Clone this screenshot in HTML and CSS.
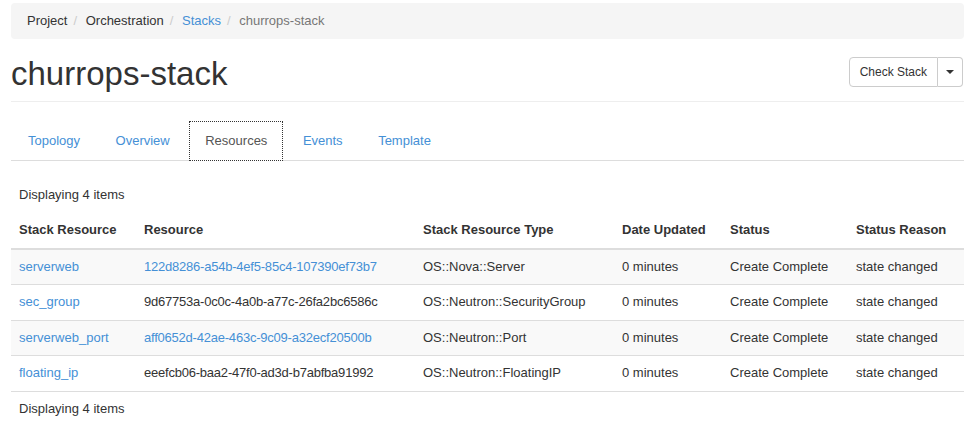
FILE: index.html
```html
<!DOCTYPE html>
<html>
<head>
<meta charset="utf-8">
<link rel="stylesheet" href="styles.css">
</head>
<body>
<div class="page">
  <ol class="breadcrumb">
    <li>Project</li>
    <li>Orchestration</li>
    <li><a href="#">Stacks</a></li>
    <li class="current">churrops-stack</li>
  </ol>
  <div class="page-header">
    <h1>churrops-stack</h1>
    <div class="btn-group">
      <button class="btn">Check Stack</button>
      <button class="btn caret-btn"><span class="caret"></span></button>
    </div>
  </div>
  <ul class="tabs">
    <li><a href="#">Topology</a></li>
    <li><a href="#">Overview</a></li>
    <li class="active"><a href="#">Resources</a></li>
    <li><a href="#">Events</a></li>
    <li><a href="#">Template</a></li>
  </ul>
  <table class="table">
    <thead>
      <tr class="meta"><td colspan="6">Displaying 4 items</td></tr>
      <tr class="heads">
        <th class="c1">Stack Resource</th>
        <th class="c2">Resource</th>
        <th class="c3">Stack Resource Type</th>
        <th class="c4">Date Updated</th>
        <th class="c5">Status</th>
        <th class="c6">Status Reason</th>
      </tr>
    </thead>
    <tbody>
      <tr>
        <td><a href="#">serverweb</a></td>
        <td class="uuid"><a href="#">122d8286-a54b-4ef5-85c4-107390ef73b7</a></td>
        <td>OS::Nova::Server</td>
        <td>0 minutes</td>
        <td>Create Complete</td>
        <td>state changed</td>
      </tr>
      <tr>
        <td><a href="#">sec_group</a></td>
        <td class="uuid">9d67753a-0c0c-4a0b-a77c-26fa2bc6586c</td>
        <td>OS::Neutron::SecurityGroup</td>
        <td>0 minutes</td>
        <td>Create Complete</td>
        <td>state changed</td>
      </tr>
      <tr>
        <td><a href="#">serverweb_port</a></td>
        <td class="uuid"><a href="#">aff0652d-42ae-463c-9c09-a32ecf20500b</a></td>
        <td>OS::Neutron::Port</td>
        <td>0 minutes</td>
        <td>Create Complete</td>
        <td>state changed</td>
      </tr>
      <tr>
        <td><a href="#">floating_ip</a></td>
        <td class="uuid">eeefcb06-baa2-47f0-ad3d-b7abfba91992</td>
        <td>OS::Neutron::FloatingIP</td>
        <td>0 minutes</td>
        <td>Create Complete</td>
        <td>state changed</td>
      </tr>
    </tbody>
    <tfoot>
      <tr class="meta"><td colspan="6">Displaying 4 items</td></tr>
    </tfoot>
  </table>
</div>
</body>
</html>
```
FILE: styles.css
```css
* { box-sizing: border-box; }
html, body { margin: 0; padding: 0; background: #fff; }
body {
  font-family: "Liberation Sans", Arial, sans-serif;
  font-size: 13px;
  line-height: 1.428571;
  color: #333;
}
a { color: #4590d6; text-decoration: none; }
.page { padding: 3px 11px 0 11px; width: 975px; }

.breadcrumb {
  list-style: none;
  margin: 0;
  padding: 9px 16px 8px 16px;
  background: #f5f5f5;
  border-radius: 4px;
  display: flex;
}
.breadcrumb li + li::before {
  content: "/\00a0";
  color: #ccc;
  padding: 0 5px;
  margin-left: 1px;
}
.breadcrumb .current { color: #777; }

.page-header {
  display: flex;
  justify-content: space-between;
  align-items: flex-start;
  margin-top: 16px;
  padding-bottom: 9px;
  border-bottom: 1px solid #eee;
}
.page-header h1 {
  margin: 0;
  font-size: 33px;
  font-weight: 500;
  line-height: 1.1;
  color: #333;
  padding-top: 1px;
}
.btn-group { display: flex; margin-top: 2px; margin-right: 1px; }
.btn {
  font-family: inherit;
  font-size: 12px;
  line-height: 1.5;
  color: #333;
  background: #fff;
  border: 1px solid #ccc;
  padding: 5px 10px;
  height: 30px;
  border-radius: 4px 0 0 4px;
  margin: 0;
}
.caret-btn {
  border-left: none;
  border-radius: 0 4px 4px 0;
  width: 25px;
  padding: 0;
  display: flex;
  align-items: center;
  justify-content: center;
}
.caret {
  width: 0; height: 0;
  border-left: 4px solid transparent;
  border-right: 4px solid transparent;
  border-top: 4px solid #333;
}

.tabs {
  list-style: none;
  margin: 19px 0 0 0;
  padding: 0;
  display: flex;
  border-bottom: 1px solid #ddd;
}
.tabs li { margin-bottom: -1px; }
.tabs a {
  display: block;
  padding: 10px 15px;
  margin-right: 3.5px;
  border: 1px solid transparent;
  border-radius: 4px 4px 0 0;
}
.tabs li:first-child a { margin-left: 1px; }
.tabs .active a {
  color: #555;
  background: #fff;
  border: 1px dotted #333;
  border-radius: 0;
}

.table {
  width: 100%;
  border-collapse: collapse;
  margin-top: 17px;
}
.table td, .table th {
  padding: 8px;
  text-align: left;
  vertical-align: top;
  line-height: 1.428571;
}
.table th { font-weight: bold; border-bottom: 2px solid #ddd; }
.table tbody td { border-top: 1px solid #ddd; }
.table tbody tr:nth-child(odd) { background: #f9f9f9; }
.table tfoot td { border-top: 1px solid #ddd; }
.uuid { letter-spacing: -0.22px; }
.c1 { width: 125px; }
.c2 { width: 279px; }
.c3 { width: 199px; }
.c4 { width: 108px; }
.c5 { width: 126px; }
```
